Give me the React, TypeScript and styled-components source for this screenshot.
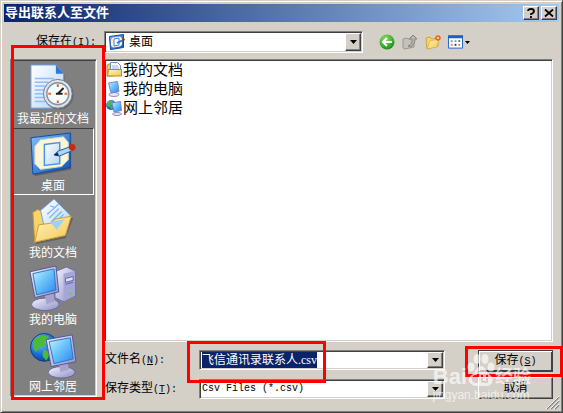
import React, { useEffect, useRef } from "react";
import styled, { createGlobalStyle, css } from "styled-components";

const face = "#d4d0c8";
const shadow = "#808080";
const dark = "#404040";

const sunken = css`
  border: 1px solid;
  border-color: ${shadow} #fff #fff ${shadow};
  box-shadow: inset 1px 1px 0 ${dark}, inset -1px -1px 0 ${face};
`;
const raised = css`
  border: 1px solid;
  border-color: #fff ${dark} ${dark} #fff;
  box-shadow: inset -1px -1px 0 ${shadow};
`;

const GlobalStyle = createGlobalStyle`
  * { box-sizing: border-box; }
  body { margin: 0; background: ${face}; }
  body, button, input, select {
    font-family: "Liberation Serif", "Noto Sans CJK SC", serif;
    font-size: 12px;
    line-height: 16px;
    color: #000;
  }
  button, input, select { margin: 0; padding: 0; border-radius: 0; }
  svg { display: block; flex: none; overflow: visible; }
`;

const Dialog = styled.main`
  position: relative;
  display: flex;
  flex-direction: column;
  min-height: 100vh;
  padding: 3px;
  background: ${face};
  border: 1px solid;
  border-color: ${face} ${dark} ${dark} ${face};
  box-shadow: inset 1px 1px 0 #fff, inset -1px -1px 0 ${shadow};
`;
const TitleBar = styled.header`
  display: flex;
  align-items: center;
  height: 18px;
  padding: 0 2px 0 1px;
  background: linear-gradient(90deg, #0a246a, #a6caf0);
`;
const Title = styled.h1`
  flex: 1;
  margin: 0;
  color: #fff;
  font-size: 13px;
  line-height: 18px;
  font-weight: 700;
`;
const CaptionButton = styled.button`
  ${raised}
  display: grid;
  place-items: center;
  width: 16px;
  height: 14px;
  margin-left: 2px;
  background: ${face};
`;
const Toolbar = styled.div`
  display: flex;
  align-items: center;
  padding: 9px 6px 6px;
`;
const LookInLabel = styled.label`
  width: 94px;
  padding-right: 8px;
  text-align: right;
`;
const Latin = styled.span`
  font-family: "Liberation Mono", monospace;
  font-size: 10px;
`;
const Combo = styled.div<{ $height: number }>`
  ${sunken}
  display: flex;
  flex: 1;
  align-items: stretch;
  min-width: 0;
  height: ${(p) => p.$height}px;
  padding: 1px;
  background: #fff;
`;
const ComboIcon = styled.span`
  display: grid;
  place-items: center;
  width: 22px;
`;
const Select = styled.select<{ $mono?: boolean }>`
  flex: 1;
  min-width: 0;
  padding-left: 1px;
  appearance: none;
  border: 0;
  outline: 0;
  background: transparent;
  ${(p) => p.$mono && css`font-family: "Liberation Mono", monospace; font-size: 10px;`}
`;
const FileInput = styled.input`
  flex: 1;
  align-self: center;
  min-width: 0;
  height: 16px;
  margin-left: 1px;
  border: 0;
  outline: 0;
  background: transparent;
  &::selection { background: #0a246a; color: #fff; }
`;
const DropButton = styled.button`
  ${raised}
  display: grid;
  place-items: center;
  width: 16px;
  background: ${face};
`;
const Tools = styled.div`
  display: flex;
  gap: 7px;
  width: 190px;
  padding-left: 16px;
`;
const ToolButton = styled.button`
  display: flex;
  align-items: center;
  gap: 2px;
  border: 0;
  background: none;
`;
const Body = styled.div`
  display: flex;
  flex: 1;
  gap: 7px;
  padding: 0 6px 10px;
`;
const Places = styled.nav`
  ${sunken}
  position: relative;
  align-self: flex-start;
  width: 87px;
  padding: 1px 2px 0 1px;
  background: ${shadow};
`;
const Place = styled.button<{ $active?: boolean }>`
  display: flex;
  flex-direction: column;
  align-items: center;
  justify-content: flex-end;
  width: 100%;
  height: 67px;
  border: 1px solid transparent;
  ${(p) => p.$active && css`border-color: ${dark} #fff #fff ${dark};`}
  background: none;
  color: #fff;
  white-space: nowrap;
`;
const Content = styled.div`
  display: flex;
  flex: 1;
  flex-direction: column;
  gap: 8px;
  min-width: 0;
`;
const FileList = styled.ul`
  ${sunken}
  flex: 1;
  margin: 0;
  padding: 0 1px 1px;
  background: #fff;
  list-style: none;
`;
const FileItem = styled.li`
  display: flex;
  align-items: center;
  gap: 1px;
  height: 19px;
  font-size: 15px;
`;
const Form = styled.form`
  display: flex;
  gap: 33px;
`;
const Fields = styled.div`
  display: flex;
  flex: 1;
  flex-direction: column;
  gap: 9px;
`;
const Field = styled.div`
  position: relative;
  display: flex;
  align-items: center;
`;
const FieldLabel = styled.label`
  width: 95px;
  padding-left: 1px;
`;
const Actions = styled.div`
  display: flex;
  flex-direction: column;
  gap: 5px;
`;
const ActionSlot = styled.div`
  position: relative;
`;
const ActionButton = styled.button<{ $primary?: boolean }>`
  ${raised}
  display: block;
  width: 75px;
  height: 22px;
  background: ${face};
  ${(p) => p.$primary && css`
    border-color: ${dark};
    box-shadow: inset 1px 1px 0 #fff, inset -1px -1px 0 ${dark};
  `}
`;
const areas = {
  places: "-15px -9px -4px 0",
  name: "-9px 119px -13px 83px",
  save: "-4px -10px -5px -13px",
};
const Highlight = styled.span<{ $area: keyof typeof areas }>`
  position: absolute;
  z-index: 2;
  inset: ${(p) => areas[p.$area]};
  border: 3px solid #f00;
  pointer-events: none;
`;
const Grip = styled.div`
  position: absolute;
  right: 3px;
  bottom: 3px;
`;
const Watermark = styled.div`
  position: absolute;
  z-index: 3;
  right: 31px;
  bottom: 9px;
  color: #fff;
  opacity: 0.65;
  font-family: "Liberation Sans", "Noto Sans CJK SC", sans-serif;
  white-space: nowrap;
  pointer-events: none;
`;
const WatermarkBrand = styled.div`
  display: flex;
  align-items: flex-end;
  font-size: 22px;
  line-height: 20px;
  font-weight: 700;
`;
const WatermarkWord = styled.span`
  font-size: 18px;
`;
const WatermarkSite = styled.div`
  font-size: 12px;
  line-height: 16px;
`;

const Gradients = () => (
  <svg width="0" height="0" aria-hidden="true">
    <defs>
      <linearGradient id="screen" x1="0" y1="0" x2="1" y2="1">
        <stop offset="0" stopColor="#c9f3ff" /><stop offset=".45" stopColor="#6cc4fb" /><stop offset="1" stopColor="#2a86ee" />
      </linearGradient>
      <linearGradient id="metal" x1="0" y1="0" x2="1" y2="1">
        <stop offset="0" stopColor="#f4f4ff" /><stop offset="1" stopColor="#8d8cc4" />
      </linearGradient>
      <linearGradient id="paper" x1="0" y1="0" x2="1" y2="1">
        <stop offset="0" stopColor="#fff" /><stop offset="1" stopColor="#b4d4fb" />
      </linearGradient>
      <linearGradient id="folder" x1="0" y1="0" x2="1" y2="1">
        <stop offset="0" stopColor="#fff6c2" /><stop offset="1" stopColor="#f3c54d" />
      </linearGradient>
      <linearGradient id="frame" x1="0" y1="0" x2="1" y2="1">
        <stop offset="0" stopColor="#7fc0fb" /><stop offset="1" stopColor="#0b50b8" />
      </linearGradient>
      <radialGradient id="globe" cx=".35" cy=".3" r=".8">
        <stop offset="0" stopColor="#79c9ff" /><stop offset=".6" stopColor="#1569d6" /><stop offset="1" stopColor="#073a90" />
      </radialGradient>
      <radialGradient id="green" cx=".4" cy=".3" r=".8">
        <stop offset="0" stopColor="#8fe070" /><stop offset=".7" stopColor="#2ea526" /><stop offset="1" stopColor="#167a14" />
      </radialGradient>
    </defs>
  </svg>
);

type IconProps = { size: number };

const RecentIcon = ({ size }: IconProps) => (
  <svg width={size} height={size} viewBox="2 0 48 48">
    <path d="M4 1h26l8 9v36H4z" fill="#333" opacity=".35" />
    <path d="M3 0h26l8 9v36H3z" fill="url(#paper)" stroke="#6d9fe0" />
    <path d="M29 0v9h8z" fill="#2f78d8" />
    <path d="M7 14h20M7 18h14M7 22h11M7 26h10M7 30h10M7 34h11M7 38h13" stroke="#8fbdf5" strokeWidth="1.6" />
    <circle cx="32" cy="31" r="15.5" fill="#555" opacity=".6" />
    <circle cx="31" cy="30" r="15" fill="#dfe4ea" stroke="#6e7c8c" />
    <circle cx="31" cy="30" r="11.5" fill="#f7fcff" stroke="#8095a8" strokeWidth="1.5" />
    <path d="M31 20v3M31 37v3M21 30h3M38 30h3" stroke="#f06a22" strokeWidth="2.2" />
    <path d="M29 30h7M31 30l6-6" stroke="#222" strokeWidth="2" fill="none" />
  </svg>
);
const DesktopIcon = ({ size }: IconProps) => (
  <svg width={size} height={size} viewBox="0 0 48 48">
    <path d="M3 7 43 1v38L5 46z" fill="#333" opacity=".45" />
    <path d="M1 6 42 1v36L3 44z" fill="url(#frame)" stroke="#0d4aa5" />
    <path d="m11 8 24-3 5 6v18l-7 7-22 3-6-6V15z" fill="#fdf5d5" stroke="#c8d3c8" />
    <path d="m15 13 16-2v22l-16 2z" fill="url(#paper)" stroke="#4594e8" strokeWidth="1.5" />
    <path d="m25 24 4-4 14-5 2 4-14 6z" fill="#a9d4fb" stroke="#24589c" />
    <path d="m25 24 4-3 1 4z" fill="#222" />
    <circle cx="44" cy="16" r="3.5" fill="#c52a16" />
  </svg>
);
const DocumentsIcon = ({ size }: IconProps) => (
  <svg width={size} height={size} viewBox="-1 0 48 48">
    <path d="m3 14 5-3 8 4 4 2 24 3-8 21-31 6z" fill="#333" opacity=".4" />
    <path d="m2 14 5-3 7 3v5l20-4v23L4 45z" fill="#f6d566" stroke="#c9952c" />
    <path d="m10 12 14-12 17 17-13 17-14-4z" fill="url(#paper)" stroke="#6a9fdb" />
    <path d="m20 7 5 2 4-4M17 16l8-7M19 20l10-10M21 24l11-11M25 25l9-9" stroke="#7ab1ef" strokeWidth="1.3" fill="none" />
    <path d="m4 45 4-18 14-2 3-4 17-3-6 20z" fill="url(#folder)" stroke="#cc9d36" />
    <path d="m20 24 15-3-8 11z" fill="#9dd0fa" />
  </svg>
);
const ComputerIcon = ({ size }: IconProps) => (
  <svg width={size} height={size} viewBox="0 0 48 48">
    <path d="m26 6 12-5 9 4v26l-13 6-8-4z" fill="url(#metal)" stroke="#6866a4" />
    <path d="m35 8 12-3v26l-12 6z" fill="#a6a5d8" />
    <path d="m37 13 8-2v4l-8 2zM37 19l8-2" fill="#dfdff8" stroke="#6664a0" />
    <circle cx="42" cy="29" r="1.5" fill="#5fd34a" />
    <ellipse cx="16" cy="40" rx="14.5" ry="6.500" fill="url(#metal)" stroke="#66659c" />
    <path d="m15 28 9-2 2 11-9 3z" fill="#a4a4cf" />
    <path d="m0 6 27-6 3 27-25 6z" fill="url(#metal)" stroke="#55549a" />
    <path d="m3 8 22-5 2 22-20 5z" fill="url(#screen)" stroke="#2876c7" />
  </svg>
);
const NetworkIcon = ({ size }: IconProps) => (
  <svg width={size} height={size} viewBox="0 0 48 48">
    <circle cx="15" cy="15" r="14.5" fill="url(#globe)" stroke="#0b3c83" />
    <path d="M4 7 12 2l8 2-5 5 2 4-7 2-4 5-3-5zM14 17l8 3-5 9-4-5z" fill="#4cba38" />
    <ellipse cx="33" cy="41" rx="14" ry="6" fill="url(#metal)" stroke="#66659c" />
    <path d="m29 30 9-2 3 10-9 3z" fill="#a4a4cf" />
    <path d="m17 7 27-5 4 28-26 5z" fill="url(#metal)" stroke="#55549a" />
    <path d="m20 9 22-4 3 22-20 5z" fill="url(#screen)" stroke="#2876c7" />
  </svg>
);
const SmallDesktopIcon = () => (
  <svg width="16" height="16" viewBox="0 0 16 16">
    <path d="m.5 2.500 14-2v13l-13 2z" fill="url(#frame)" stroke="#0d4aa5" />
    <path d="m4 3.500 7-1 2 2v6l-2 2-7 1-2-2v-6z" fill="#fdf5d5" />
    <path d="m5 5 5-1v7l-5 1z" fill="#fff" stroke="#3b82d6" />
    <path d="m8 9 6-3" stroke="#1d6fd0" strokeWidth="1.500" />
    <circle cx="14.500" cy="5.500" r="1.300" fill="#c52a16" />
  </svg>
);
const SmallDocumentsIcon = () => (
  <svg width="16" height="16" viewBox="0 0 16 16">
    <path d="M1 3.500 3 2h4l1 1.500V14H1z" fill="#f4cb50" stroke="#b98a25" />
    <path d="M4.500.500h7l3 3V12h-10z" fill="#fff" stroke="#5f93dc" />
    <path d="M6 4h6M6 6h7" stroke="#8ab6ef" />
    <path d="M2.500 7.500h13v6.500h-14z" fill="url(#folder)" stroke="#b98a25" />
  </svg>
);
const SmallComputerIcon = () => (
  <svg width="16" height="16" viewBox="0 0 16 16">
    <ellipse cx="8" cy="13.500" rx="5" ry="2" fill="#e8e8fa" stroke="#8c8bbc" />
    <path d="m2.500 2 9-1.500 1.500 10-8 1.500z" fill="url(#screen)" stroke="#7a86c4" />
  </svg>
);
const SmallNetworkIcon = () => (
  <svg width="16" height="16" viewBox="0 0 16 16">
    <circle cx="5" cy="5" r="5" fill="url(#globe)" />
    <path d="m1 3 3-2 3 1-2 3-3 2zM4 6l3 1-2 3z" fill="#4cba38" />
    <ellipse cx="11" cy="14" rx="4.500" ry="1.500" fill="#e8e8fa" stroke="#8c8bbc" />
    <path d="m6 3 8.500-1.500 1 9-7.500 1.500z" fill="url(#screen)" stroke="#7a86c4" />
  </svg>
);
const PawIcon = () => (
  <svg width="28" height="34" viewBox="0 0 28 34" fill="#fff">
    <ellipse cx="4" cy="14" rx="3.500" ry="4.500" />
    <ellipse cx="10" cy="6" rx="3.500" ry="5" />
    <ellipse cx="18" cy="6" rx="3.500" ry="5" />
    <ellipse cx="24" cy="14" rx="3.500" ry="4.500" />
    <path fillRule="evenodd" d="M14 13c4 0 5 5 8 8s5 5 3 9-7 3-11 3-8 1-11-3 0-7 3-9 4-8 8-8zm-5 9a4 4 0 1 0 0 8h3V19h-2v3zm5 0v6q0 2 2 2h5v-8h-2v6h-3v-6z" />
  </svg>
);
const Arrow = () => <svg width="7" height="4" viewBox="0 0 7 4"><path d="M0 0h7L3.500 4z" /></svg>;

const places = [
  { name: "我最近的文档", Icon: RecentIcon },
  { name: "桌面", Icon: DesktopIcon, active: true },
  { name: "我的文档", Icon: DocumentsIcon },
  { name: "我的电脑", Icon: ComputerIcon },
  { name: "网上邻居", Icon: NetworkIcon },
];
const files = [
  { name: "我的文档", Icon: SmallDocumentsIcon },
  { name: "我的电脑", Icon: SmallComputerIcon },
  { name: "网上邻居", Icon: SmallNetworkIcon },
];

export default function App() {
  const nameRef = useRef<HTMLInputElement>(null);
  useEffect(() => {
    nameRef.current?.focus();
    nameRef.current?.select();
  }, []);
  return (
    <>
    <GlobalStyle />
    <Dialog>
      <TitleBar>
        <Title>导出联系人至文件</Title>
        <CaptionButton aria-label="帮助">
          <svg width="8" height="10" viewBox="0 0 8 10"><path d="M1 3Q1 1 4 1t3 2-3 3v1M4 8v2" fill="none" stroke="#000" strokeWidth="1.800" /></svg>
        </CaptionButton>
        <CaptionButton aria-label="关闭">
          <svg width="8" height="8" viewBox="0 0 8 8"><path d="m0 .5 8 7m0-7-8 7" stroke="#000" strokeWidth="1.700" /></svg>
        </CaptionButton>
      </TitleBar>
      <Toolbar>
        <LookInLabel htmlFor="look-in">保存在<Latin>(<u>I</u>):</Latin></LookInLabel>
        <Combo $height={22}>
          <ComboIcon><SmallDesktopIcon /></ComboIcon>
          <Select id="look-in"><option>桌面</option></Select>
          <DropButton aria-label="展开位置"><Arrow /></DropButton>
        </Combo>
        <Tools>
          <ToolButton aria-label="后退">
            <svg width="16" height="16" viewBox="0 0 16 16"><circle cx="8" cy="8" r="7.500" fill="url(#green)" /><path d="M13 8H4m4-4L4 8l4 4" stroke="#fff" strokeWidth="2" fill="none" /></svg>
          </ToolButton>
          <ToolButton aria-label="向上一级">
            <svg width="16" height="16" viewBox="0 0 16 16"><path d="m1 5 4-1 1 1 6-1v9l-9 2-2-1z" fill="#c3c1bc" stroke="#99968f" /><path d="M6 12q5-2 4-7H7l4-4 4 4h-2q0 6-5 8z" fill="#b8b6b2" stroke="#85837e" /></svg>
          </ToolButton>
          <ToolButton aria-label="新建文件夹">
            <svg width="16" height="16" viewBox="0 0 16 16"><path d="m1 4 4-1 2 2 6-1v8L2 15z" fill="#f6d566" stroke="#d4a13a" /><path d="m2 15 3-8 9-2-2 8z" fill="url(#folder)" stroke="#d4a13a" strokeWidth=".6" /><path d="M13 1v6M10 4h6M11 2l4 4M15 2l-4 4" stroke="#ee5a20" strokeWidth="1.300" /><circle cx="13" cy="4" r="1.300" fill="#ffd257" /></svg>
          </ToolButton>
          <ToolButton aria-label="查看">
            <svg width="15" height="14" viewBox="0 0 16 14"><path d="M.5.5h15v13H.5z" fill="#fff" stroke="#1463cb" /><path d="M0 0h16v3H0z" fill="#1463cb" /><path d="M3 5h2v2H3zM7 5h2v2H7z" fill="#8b8bc6" /><path d="M11 5h2v2h-2z" fill="#3b9a40" /><path d="M3 9h2v2H3z" fill="#ee7b55" /><path d="M7 9h2v2H7z" fill="#183c9a" /><path d="M11 9h2v2h-2z" fill="#c29a28" /></svg>
            <svg width="5" height="3" viewBox="0 0 5 3"><path d="M0 0h5L2.500 3z" /></svg>
          </ToolButton>
        </Tools>
      </Toolbar>
      <Body>
        <Places aria-label="位置">
          {places.map(({ name, Icon, active }) => (
            <Place key={name} $active={active}><Icon size={46} />{name}</Place>
          ))}
          <Highlight $area="places" />
        </Places>
        <Content>
          <FileList>
            {files.map(({ name, Icon }) => <FileItem key={name}><Icon />{name}</FileItem>)}
          </FileList>
          <Form onSubmit={(e) => e.preventDefault()}>
            <Fields>
              <Field>
                <FieldLabel htmlFor="file-name">文件名<Latin>(<u>N</u>):</Latin></FieldLabel>
                <Combo $height={20}>
                  <FileInput id="file-name" ref={nameRef} defaultValue="飞信通讯录联系人.csv" />
                  <DropButton type="button" aria-label="展开文件名"><Arrow /></DropButton>
                </Combo>
                <Highlight $area="name" />
              </Field>
              <Field>
                <FieldLabel htmlFor="file-type">保存类型<Latin>(<u>T</u>):</Latin></FieldLabel>
                <Combo $height={20}>
                  <Select id="file-type" $mono><option>Csv Files (*.csv)</option></Select>
                  <DropButton type="button" aria-label="展开保存类型"><Arrow /></DropButton>
                </Combo>
              </Field>
            </Fields>
            <Actions>
              <ActionSlot>
                <ActionButton $primary>保存<Latin>(<u>S</u>)</Latin></ActionButton>
                <Highlight $area="save" />
              </ActionSlot>
              <ActionButton type="button">取消</ActionButton>
            </Actions>
          </Form>
        </Content>
      </Body>
      <Grip>
        <svg width="12" height="12" viewBox="0 0 12 12">
          <path d="M0 12 12 0M4 12l8-8M8 12l4-4" stroke="#808080" strokeWidth="1.500" />
          <path d="M-1 12 12-1M3 12l9-9M7 12l5-5" stroke="#fff" strokeWidth=".8" />
        </svg>
      </Grip>
      <Watermark aria-hidden="true">
        <WatermarkBrand>
          Bai
          <PawIcon />
          <WatermarkWord>经验</WatermarkWord>
        </WatermarkBrand>
        <WatermarkSite>jingyan.baidu.com</WatermarkSite>
      </Watermark>
      <Gradients />
    </Dialog>
    </>
  );
}
